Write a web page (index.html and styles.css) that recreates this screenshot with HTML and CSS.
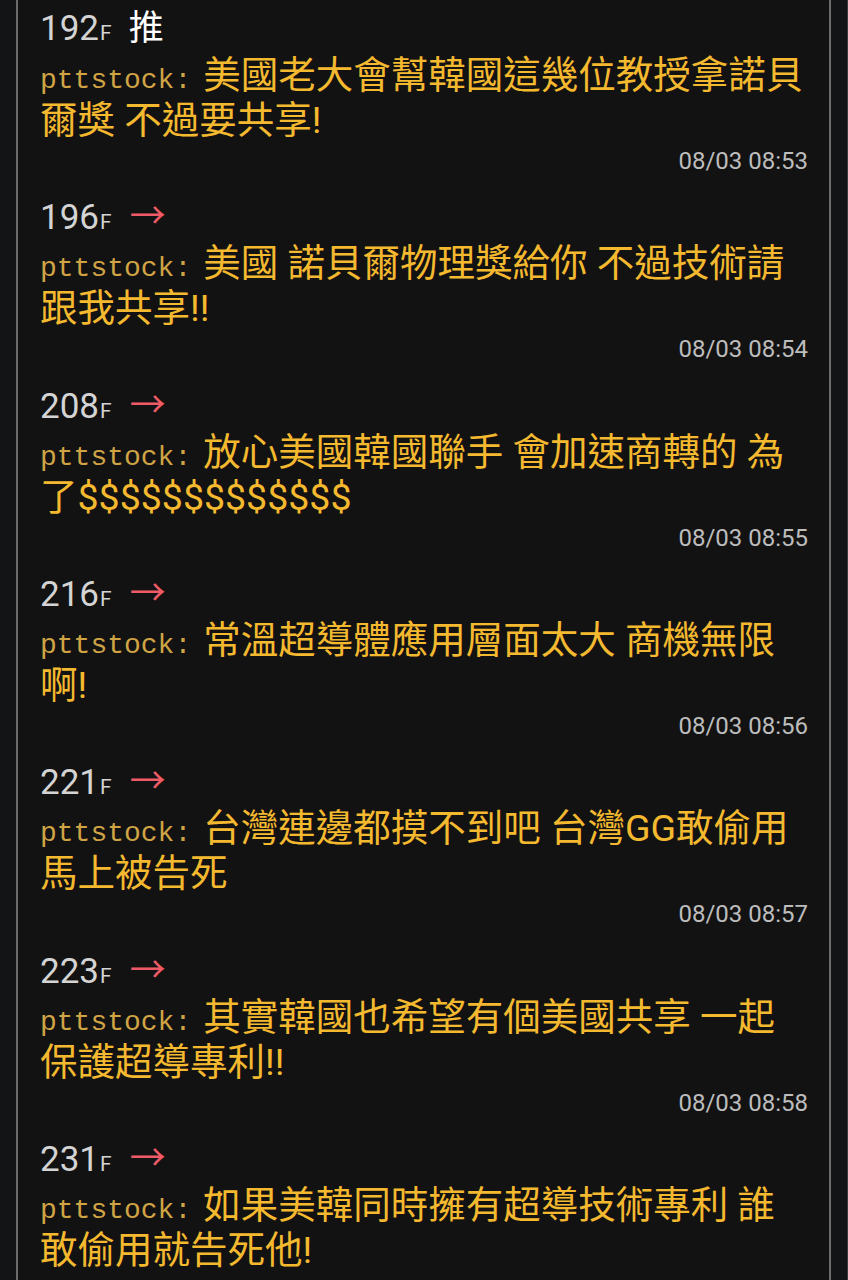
FILE: index.html
```html
<!DOCTYPE html>
<html lang="zh-Hant">
<head>
<meta charset="utf-8">
<link rel="stylesheet" href="styles.css">
</head>
<body>
<div class="screen">
  <div class="panel">
    <div class="push">
      <div class="head"><span class="floor">192</span><span class="f">F</span><span class="tag up">推</span></div>
      <div class="content"><span class="user">pttstock:</span>美國老大會幫韓國這幾位教授拿諾貝爾獎 不過要共享!</div>
      <div class="time">08/03 08:53</div>
    </div>
    <div class="push">
      <div class="head"><span class="floor">196</span><span class="f">F</span><span class="tag arrow">→</span></div>
      <div class="content"><span class="user">pttstock:</span>美國 諾貝爾物理獎給你 不過技術請跟我共享!!</div>
      <div class="time">08/03 08:54</div>
    </div>
    <div class="push">
      <div class="head"><span class="floor">208</span><span class="f">F</span><span class="tag arrow">→</span></div>
      <div class="content"><span class="user">pttstock:</span>放心美國韓國聯手 會加速商轉的 為了$$$$$$$$$$$$$</div>
      <div class="time">08/03 08:55</div>
    </div>
    <div class="push">
      <div class="head"><span class="floor">216</span><span class="f">F</span><span class="tag arrow">→</span></div>
      <div class="content"><span class="user">pttstock:</span>常溫超導體應用層面太大 商機無限啊!</div>
      <div class="time">08/03 08:56</div>
    </div>
    <div class="push">
      <div class="head"><span class="floor">221</span><span class="f">F</span><span class="tag arrow">→</span></div>
      <div class="content"><span class="user">pttstock:</span>台灣連邊都摸不到吧 台灣GG敢偷用馬上被告死</div>
      <div class="time">08/03 08:57</div>
    </div>
    <div class="push">
      <div class="head"><span class="floor">223</span><span class="f">F</span><span class="tag arrow">→</span></div>
      <div class="content"><span class="user">pttstock:</span>其實韓國也希望有個美國共享 一起保護超導專利!!</div>
      <div class="time">08/03 08:58</div>
    </div>
    <div class="push">
      <div class="head"><span class="floor">231</span><span class="f">F</span><span class="tag arrow">→</span></div>
      <div class="content"><span class="user">pttstock:</span>如果美韓同時擁有超導技術專利 誰敢偷用就告死他!</div>
      <div class="time">08/03 08:59</div>
    </div>
  </div>
</div>
</body>
</html>
```

FILE: styles.css
```css
html, body {
  margin: 0;
  padding: 0;
  background: #121212;
}
body {
  width: 848px;
  height: 1280px;
  overflow: hidden;
  font-family: Roboto, "Noto Sans CJK TC", sans-serif;
}
.screen {
  width: 848px;
  height: 1280px;
  box-sizing: border-box;
  padding-left: 16px;
  border-right: 1px solid #3a3a3a;
  background: #131415;
}
.panel {
  width: 815px;
  box-sizing: border-box;
  border-left: 2px solid #6c6c6c;
  border-right: 2px solid #6c6c6c;
  background: #121212;
  padding: 2px 22px 0 22px;
  min-height: 1280px;
}
.push {
  height: 188.33px;
}
.head {
  height: 46px;
  line-height: 46px;
  display: flex;
  align-items: baseline;
  white-space: nowrap;
}
.floor {
  font-size: 35px;
  color: #d4d4d4;
}
.f {
  font-size: 21px;
  color: #d4d4d4;
  margin-left: 1px;
}
.tag {
  margin-left: 17px;
  font-family: "Noto Sans CJK TC", sans-serif;
  font-size: 35px;
}
.up {
  color: #ffffff;
}
.arrow {
  color: #ee5b66;
  font-size: 36px;
  margin-left: 18px;
}
.content {
  margin-top: 5px;
  font-size: 37.5px;
  line-height: 45px;
  color: #f4b92f;
  height: 90px;
}
.user {
  font-family: "Liberation Mono", monospace;
  font-size: 28px;
  line-height: 30px;
  color: #d0a444;
  margin-right: 12px;
}
.time {
  text-align: right;
  font-size: 24px;
  line-height: 30px;
  color: #bdbdbd;
  padding-top: 3px;
  margin-right: -1px;
}
```
